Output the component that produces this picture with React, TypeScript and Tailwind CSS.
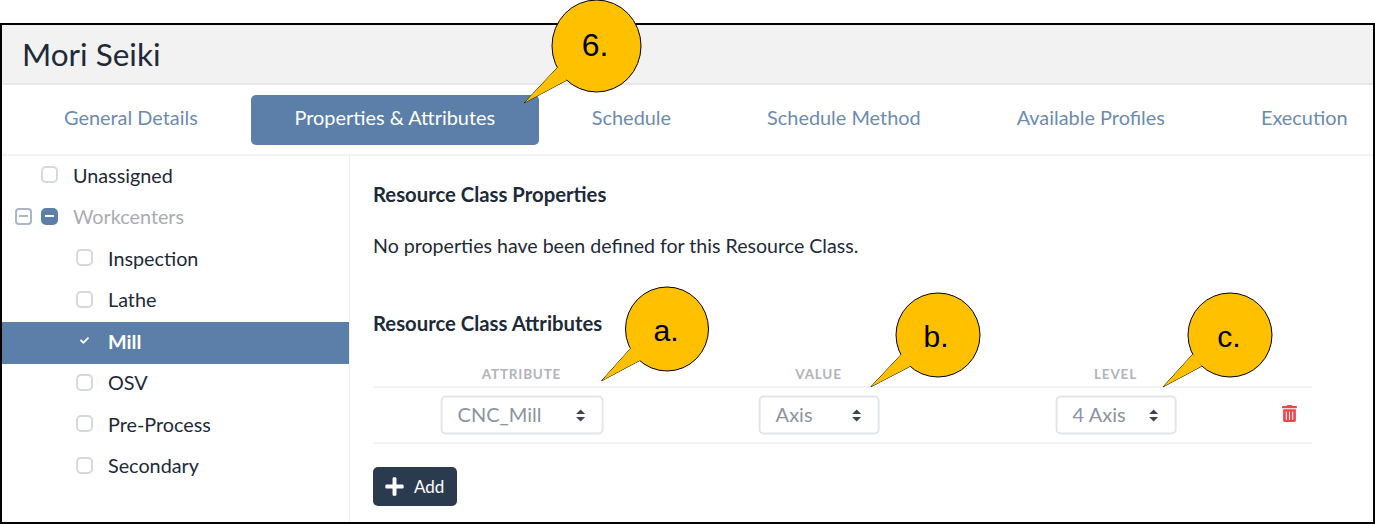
import React from "react";
import { FaTrashAlt, FaPlus, FaCheck } from "react-icons/fa";

function Callout({ box, label, size, cx, cy, rx, ry, tail, tx, ty }: { box: string; label: string; size: number; cx: number; cy: number; rx: number; ry: number; tail: string; tx: number; ty: number }) {
  return (
    <div className={box}>
      <svg width="100%" height="100%" className="overflow-visible">
        <path d={tail} fill="#FFC000" stroke="#000" strokeWidth="1" strokeLinejoin="miter" />
        <ellipse cx={cx} cy={cy} rx={rx} ry={ry} fill="#FFC000" stroke="#000" strokeWidth="1" />
        <path d={tail} fill="#FFC000" stroke="none" />
        <text x={tx} y={ty} textAnchor="middle" fontSize={size} fill="#000" fontFamily="'Liberation Sans', Arial, sans-serif">{label}</text>
      </svg>
    </div>
  );
}

function Box({ mode = "empty" }: { mode?: "empty" | "minus" | "check" }) {
  if (mode === "check") {
    return <span className="flex h-[17px] w-[17px] shrink-0 items-center justify-center text-white"><FaCheck size={9} /></span>;
  }
  if (mode === "minus") {
    return (
      <span className="flex h-[17px] w-[17px] shrink-0 items-center justify-center rounded-[5px] bg-[#5b7fa8]">
        <span className="h-[2px] w-[9px] bg-white" />
      </span>
    );
  }
  return <span className="block h-[17px] w-[17px] shrink-0 rounded-[5px] border-2 border-[#d5d9df] bg-white" />;
}

function TreeRow({ label, child = true, mode, active }: { label: string; child?: boolean; mode?: "empty" | "minus" | "check"; active?: boolean }) {
  return (
    <div className={active ? "flex h-[41.5px] items-center gap-[15px] bg-[#5b7fa8] pl-[74px] font-bold text-white" : child ? "flex h-[41.5px] items-center gap-[15px] pl-[74px] text-[#1e2a38]" : "flex h-[41.5px] items-center gap-[15px] pl-[39px] text-[#1e2a38]"}>
      <span className="block shrink-0 -translate-y-[2px]"><Box mode={mode} /></span>
      <span className="-translate-y-[1.5px]">{label}</span>
    </div>
  );
}

function Sort() {
  return (
    <svg width="10" height="14" viewBox="0 0 10 14" className="shrink-0 translate-y-[1px]">
      <path d="M5 1 L9.5 5.6 H0.5 Z M5 13 L9.5 8.4 H0.5 Z" fill="#3a4654" />
    </svg>
  );
}

function Select({ w, value }: { w: string; value: string }) {
  return (
    <div className={w + " flex h-[39px] translate-x-[0.6px] -translate-y-[0.5px] items-center justify-between rounded-[5px] border-2 border-[#e2e6eb] bg-white pl-[15px] pr-[16px] text-[20px] text-[#8a95a1]"}>
      <span className="-translate-y-[1px]">{value}</span>
      <Sort />
    </div>
  );
}

export default function App() {
  const tabs = ["General Details", "Properties & Attributes", "Schedule", "Schedule Method", "Available Profiles", "Execution"];
  return (
    <div className="relative h-[524px] w-[1375px] overflow-hidden bg-white pt-[23px] text-[19.8px] [font-family:Lato,sans-serif]">
      <div className="flex h-[501px] flex-col overflow-hidden border-2 border-black">
        <div className="flex h-[60px] shrink-0 items-center border-b-2 border-[#e8e8e8] bg-[#f2f2f2] pl-[20px] text-[31.5px] text-[#1e2a38]">
          <span className="translate-y-[1px]">Mori Seiki</span>
        </div>
        <div className="flex h-[71px] shrink-0 items-center gap-[10px] whitespace-nowrap border-b-2 border-[#f2f3f5] pl-[19px] text-[19.9px]">
          {tabs.map((t, i) => (
            <div key={t} className={i === 1 ? "flex h-[50px] w-[288px] shrink-0 items-center justify-center rounded-[5px] bg-[#5b7fa8] pb-[3px] text-white" : "flex h-[50px] shrink-0 items-center px-[43px] pb-[3px] text-[#6d8bb0]"}>
              {t}
            </div>
          ))}
        </div>
        <div className="flex min-h-0 flex-1">
          <div className="w-[348px] shrink-0 border-r border-[#eceef1]">
            <TreeRow label="Unassigned" child={false} />
            <div className="relative flex h-[41.5px] items-center gap-[15px] pl-[39px] text-[#a9adb2]">
              <span className="absolute left-[13px] top-[10px] flex h-[17px] w-[17px] items-center justify-center rounded-[4px] border-2 border-[#a9b6c4]">
                <span className="h-[2px] w-[9px] bg-[#a9b6c4]" />
              </span>
              <span className="block -translate-y-[2px]"><Box mode="minus" /></span>
              <span className="-translate-y-[1.5px]">Workcenters</span>
            </div>
            <TreeRow label="Inspection" />
            <TreeRow label="Lathe" />
            <TreeRow label="Mill" mode="check" active />
            <TreeRow label="OSV" />
            <TreeRow label="Pre-Process" />
            <TreeRow label="Secondary" />
          </div>
          <div className="flex-1 pl-[23px] pt-[23px] text-[19.6px] text-[#1e2a38]">
            <div className="text-[20.3px] font-bold leading-[30px]">Resource Class Properties</div>
            <div className="mt-[22px] leading-[30px]">No properties have been defined for this Resource Class.</div>
            <div className="mt-[47px] text-[20.3px] font-bold leading-[30px]">Resource Class Attributes</div>
            <div className="mt-[25px] w-[939px]">
              <div className="grid h-[25px] grid-cols-[297px_297px_297px_1fr] justify-items-center border-b-2 border-[#f2f3f5] pt-[1px] text-[13.5px] font-bold leading-[20px] tracking-[0.06em] text-[#b0b4ba]">
                <span>ATTRIBUTE</span>
                <span>VALUE</span>
                <span>LEVEL</span>
                <span />
              </div>
              <div className="grid h-[56px] grid-cols-[297px_297px_297px_1fr] items-center justify-items-center border-b-2 border-[#f2f3f5]">
                <Select w="w-[163px]" value="CNC_Mill" />
                <Select w="w-[121px]" value="Axis" />
                <Select w="w-[121px]" value="4 Axis" />
                <span className="block -translate-y-[2px] translate-x-[1px] text-[#e8494b]"><FaTrashAlt size={17} /></span>
              </div>
            </div>
            <button className="mt-[23px] flex h-[39px] w-[84px] items-center gap-[9px] rounded-[5px] bg-[#2b3b4f] pl-[11px] text-[17px] text-white">
              <FaPlus size={21} />
              <span>Add</span>
            </button>
          </div>
        </div>
      </div>
      <Callout box="absolute left-[520px] top-0 h-[110px] w-[130px]" label="6." size={32} cx={76.5} cy={46} rx={44.5} ry={46} tail="M38 67 L4.5 102.7 L47 80 Z" tx={75} ty={56} />
      <Callout box="absolute left-[600px] top-[285px] h-[100px] w-[115px]" label="a." size={30} cx={67} cy={44} rx={41.5} ry={42} tail="M31 63 L1.7 95.7 L40.6 75 Z" tx={66} ty={56} />
      <Callout box="absolute left-[870px] top-[290px] h-[100px] w-[115px]" label="b." size={30} cx={68} cy={45} rx={42} ry={42} tail="M31.7 64 L1 96.7 L40.7 76 Z" tx={66} ty={57} />
      <Callout box="absolute left-[1160px] top-[290px] h-[100px] w-[115px]" label="c." size={30} cx={70} cy={45} rx={42} ry={42} tail="M33 64 L3.3 96.7 L42 76 Z" tx={69} ty={57} />
    </div>
  );
}
